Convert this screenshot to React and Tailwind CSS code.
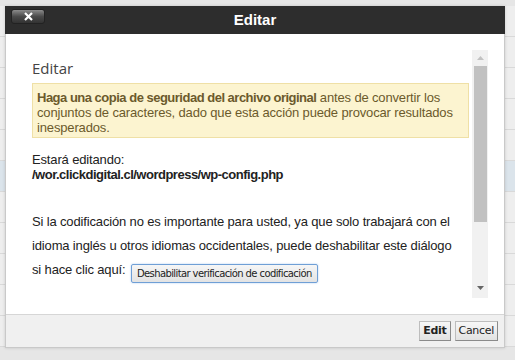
import React from 'react';

const rows = [0, 1, 2, 3, 4, 5, 6, 7, 8, 9, 10];

export default function App() {
  return (
    <div className="relative w-[515px] h-[360px] overflow-hidden bg-[#e6e6e6] font-['Liberation_Sans',Arial,sans-serif]">
      {/* page behind the dialog */}
      <div className="pt-[6px]">
        {rows.map(i => (
          <div key={i}
            className={'h-[31px] border-b border-[#d9d9d9] ' + (i === 5 ? 'bg-[#dbe4eb]' : 'bg-[#eeeeee]')} />
        ))}
      </div>

      {/* dialog */}
      <div className="absolute left-[5px] top-[6px] w-[500px] h-[342px] flex flex-col border border-[#c9c9c9] border-t-0 bg-white shadow-[0_0_3px_rgba(0,0,0,0.15)]">
        <div className="relative h-[28px] -mx-px bg-[#2d2d2d] flex items-center justify-center">
          <button className="absolute left-[6px] top-[3px] w-[34px] h-[15px] rounded-[3px] border border-[#222] bg-gradient-to-b from-[#8c8c8c] via-[#4a4a4a] to-[#333] flex items-center justify-center">
            <svg width="9" height="9" viewBox="0 0 9 9"><path d="M1 1 L8 8 M8 1 L1 8" stroke="#fff" strokeWidth="2.2" /></svg>
          </button>
          <span className="text-white font-bold text-[15px]">Editar</span>
        </div>

        <div className="h-[280px] flex pt-[16px] pb-[16px] pl-[26px] pr-[16px]">
          <div className="flex-1 pr-[3px] text-[13px] tracking-[-0.15px] text-[#222]">
            <div className="pt-[8px] mb-[5px] text-[15px] leading-[20px] tracking-normal text-[#444] font-['Open_Sans',sans-serif]">Editar</div>
            <div className="border border-[#efe0a6] bg-[#fcf4d0] text-[#6b5a2c] leading-[15px] pt-[6px] pb-[2px] pl-[4px] pr-[4px]">
              <b className="tracking-[-0.5px]">Haga una copia de seguridad del archivo original</b> antes de convertir los conjuntos de caracteres, dado que esta acción puede provocar resultados inesperados.
            </div>
            <div className="mt-[14px] leading-[15px]">
              Estará editando:<br />
              <b className="tracking-[-0.5px]">/wor.clickdigital.cl/wordpress/wp-config.php</b>
            </div>
            <div className="mt-[28px] leading-[24px] pr-[6px]">
              Si la codificación no es importante para usted, ya que solo trabajará con el idioma inglés u otros idiomas occidentales, puede deshabilitar este diálogo si hace clic aquí:{' '}
              <button className="inline-block ml-[2px] h-[19px] px-[5px] border border-[#6f9fd6] rounded-[2px] bg-gradient-to-b from-[#f6f6f6] to-[#e3e3e3] shadow-[0_0_2px_#a9c9ee] text-[10px] leading-[17px] text-[#222] font-['DejaVu_Sans',Tahoma,sans-serif] tracking-[-0.6px] align-[-3px]">
                Deshabilitar verificación de codificación
              </button>
            </div>
          </div>
          <div className="w-[16px] bg-[#f1f1f1] flex flex-col items-center">
            <div className="h-[16px] flex items-center justify-center">
              <svg width="7" height="4" viewBox="0 0 7 4"><path d="M0 4 L3.5 0 L7 4 Z" fill="#c2c2c2" /></svg>
            </div>
            <div className="w-[13px] h-[156px] bg-[#c1c1c1]" />
            <div className="flex-1" />
            <div className="h-[16px] flex items-center justify-center pb-[4px]">
              <svg width="7" height="4" viewBox="0 0 7 4"><path d="M0 0 L7 0 L3.5 4 Z" fill="#666" /></svg>
            </div>
          </div>
        </div>

        <div className="flex-1 border-t border-[#d6d6d6] bg-[#f0f0f0] flex justify-end items-start pt-[6px] pr-[6px] gap-[4px] font-['DejaVu_Sans',Tahoma,sans-serif] text-[11px] tracking-[-0.3px] text-[#222]">
          <button className="h-[20px] px-[3px] border border-[#bdbdbd] border-r-[#8a8a8a] border-b-[#8a8a8a] bg-gradient-to-b from-[#f7f7f7] to-[#e2e2e2] font-bold">Edit</button>
          <button className="h-[20px] px-[3px] border border-[#bdbdbd] border-r-[#8a8a8a] border-b-[#8a8a8a] bg-gradient-to-b from-[#f7f7f7] to-[#e2e2e2]">Cancel</button>
        </div>
      </div>
    </div>
  );
}
